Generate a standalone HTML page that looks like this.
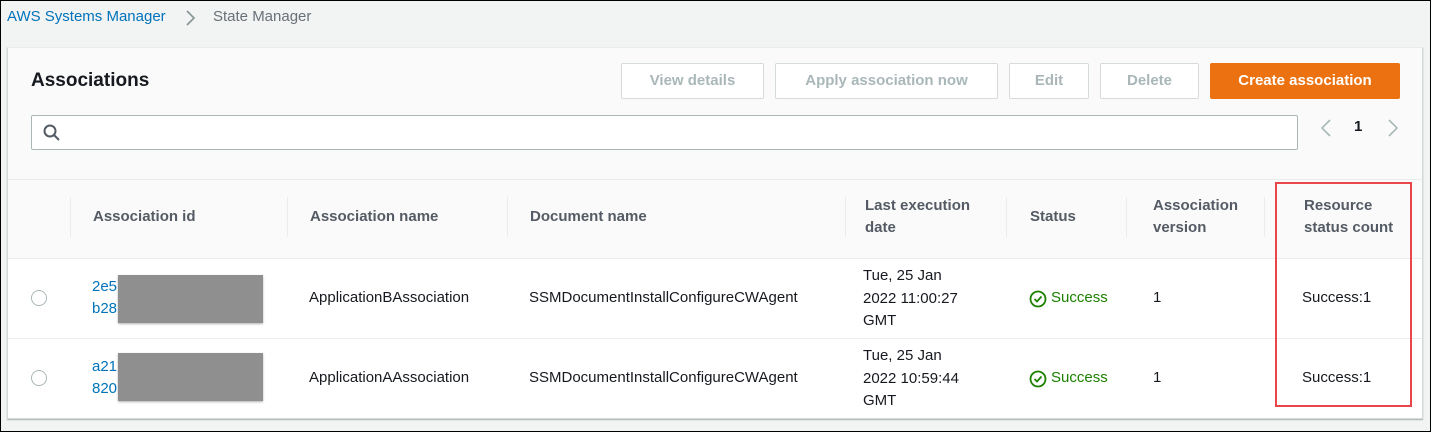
<!DOCTYPE html>
<html><head><style>
*{box-sizing:border-box;margin:0;padding:0}
body{width:1431px;height:432px;overflow:hidden;background:#f2f3f3;font-family:"Liberation Sans",sans-serif;font-size:15px;color:#16191f;position:relative}
.a{position:absolute;white-space:nowrap}
.panel{position:absolute;left:7px;top:47px;width:1416px;height:372px;background:#fafafa;border:1px solid #d5dbdb;border-top:1px solid #eaeded;box-shadow:0 1px 1px rgba(0,28,36,.3)}
.btn{position:absolute;top:63px;height:36px;border:1px solid #d5dbdb;border-radius:2px;background:#fff;color:#aab7b8;font-weight:bold;font-size:15px;text-align:center;line-height:34px}
.th{position:absolute;font-weight:bold;color:#545b64;line-height:22px}
.sep{position:absolute;top:197px;width:1px;height:40px;background:#eaeded}
.row{position:absolute;left:8px;width:1414px;background:#fff;border-top:1px solid #eaeded}
.radio{position:absolute;left:31px;width:16px;height:16px;border:1px solid #aab7b8;border-radius:50%;background:#fff}
.link{color:#0073bb;line-height:22px}
.mask{position:absolute;left:118px;width:145px;height:48px;background:#8f8f8f;box-shadow:0 1px 2px rgba(0,0,0,.3)}
.ok{color:#1d8102}
</style></head><body>
<div class="a" style="left:7px;top:8px;color:#0073bb;font-size:15px">AWS Systems Manager</div>
<svg class="a" style="left:185px;top:10px" width="12" height="16"><path d="M2 1l7 7-7 7" fill="none" stroke="#879596" stroke-width="1.6"/></svg>
<div class="a" style="left:213px;top:8px;color:#687078">State Manager</div>
<div class="panel"></div>
<div class="a" style="left:31px;top:70px;font-size:19px;font-weight:bold">Associations</div>
<div class="btn" style="left:621px;width:143px">View details</div>
<div class="btn" style="left:775px;width:223px">Apply association now</div>
<div class="btn" style="left:1009px;width:80px">Edit</div>
<div class="btn" style="left:1100px;width:99px">Delete</div>
<div class="btn" style="left:1210px;width:190px;background:#ec7211;border-color:#ec7211;color:#fff">Create association</div>
<div class="a" style="left:31px;top:115px;width:1267px;height:35px;background:#fff;border:1px solid #aab7b8;border-radius:2px"></div>
<svg class="a" style="left:42px;top:123px" width="20" height="20"><circle cx="8" cy="8" r="5.5" fill="none" stroke="#545b64" stroke-width="2"/><path d="M12 12l5 5" stroke="#545b64" stroke-width="2"/></svg>
<svg class="a" style="left:1320px;top:119px" width="12" height="18"><path d="M10 1L2 9l8 8" fill="none" stroke="#aab7b8" stroke-width="1.6"/></svg>
<div class="a" style="left:1354px;top:118px;font-weight:bold">1</div>
<svg class="a" style="left:1387px;top:119px" width="12" height="18"><path d="M2 1l8 8-8 8" fill="none" stroke="#aab7b8" stroke-width="1.6"/></svg>
<div class="a" style="left:8px;top:179px;width:1414px;height:1px;background:#eaeded"></div>
<div class="sep" style="left:70px"></div><div class="sep" style="left:287px"></div><div class="sep" style="left:507px"></div><div class="sep" style="left:845px"></div><div class="sep" style="left:1006px"></div><div class="sep" style="left:1126px"></div><div class="sep" style="left:1264px"></div>
<div class="th" style="left:93px;top:206px">Association id</div>
<div class="th" style="left:310px;top:206px">Association name</div>
<div class="th" style="left:530px;top:206px">Document name</div>
<div class="th" style="left:865px;top:195px">Last execution<br>date</div>
<div class="th" style="left:1030px;top:206px">Status</div>
<div class="th" style="left:1153px;top:195px">Association<br>version</div>
<div class="th" style="left:1304px;top:195px">Resource<br>status count</div>
<div class="row" style="top:258px;height:80px"></div>
<div class="row" style="top:338px;height:80px"></div>
<div class="radio" style="top:290px"></div>
<div class="a link" style="left:92px;top:276px">2e5<br>b28</div>
<div class="mask" style="top:275px"></div>
<div class="a" style="left:309px;top:289px">ApplicationBAssociation</div>
<div class="a" style="left:529px;top:289px">SSMDocumentInstallConfigureCWAgent</div>
<div class="a" style="left:863px;top:265px;line-height:22.5px">Tue, 25 Jan<br>2022 11:00:27<br>GMT</div>
<svg class="a" style="left:1029px;top:290px" width="18" height="18"><circle cx="9" cy="9" r="7.5" fill="none" stroke="#1d8102" stroke-width="1.8"/><path d="M5.5 9l2.5 2.5 4.5-5" fill="none" stroke="#1d8102" stroke-width="1.8"/></svg>
<div class="a ok" style="left:1051px;top:289px">Success</div>
<div class="a" style="left:1153px;top:289px">1</div>
<div class="a" style="left:1302px;top:289px">Success:1</div>
<div class="radio" style="top:370px"></div>
<div class="a link" style="left:92px;top:356px">a21<br>820</div>
<div class="mask" style="top:353px"></div>
<div class="a" style="left:309px;top:369px">ApplicationAAssociation</div>
<div class="a" style="left:529px;top:369px">SSMDocumentInstallConfigureCWAgent</div>
<div class="a" style="left:863px;top:345px;line-height:22.5px">Tue, 25 Jan<br>2022 10:59:44<br>GMT</div>
<svg class="a" style="left:1029px;top:370px" width="18" height="18"><circle cx="9" cy="9" r="7.5" fill="none" stroke="#1d8102" stroke-width="1.8"/><path d="M5.5 9l2.5 2.5 4.5-5" fill="none" stroke="#1d8102" stroke-width="1.8"/></svg>
<div class="a ok" style="left:1051px;top:369px">Success</div>
<div class="a" style="left:1153px;top:369px">1</div>
<div class="a" style="left:1302px;top:369px">Success:1</div>
<div class="a" style="left:1275px;top:182px;width:137px;height:225px;border:2px solid #e8474a"></div>
<div class="a" style="left:0;top:0;width:1431px;height:432px;border:1px solid #000"></div>
</body></html>
